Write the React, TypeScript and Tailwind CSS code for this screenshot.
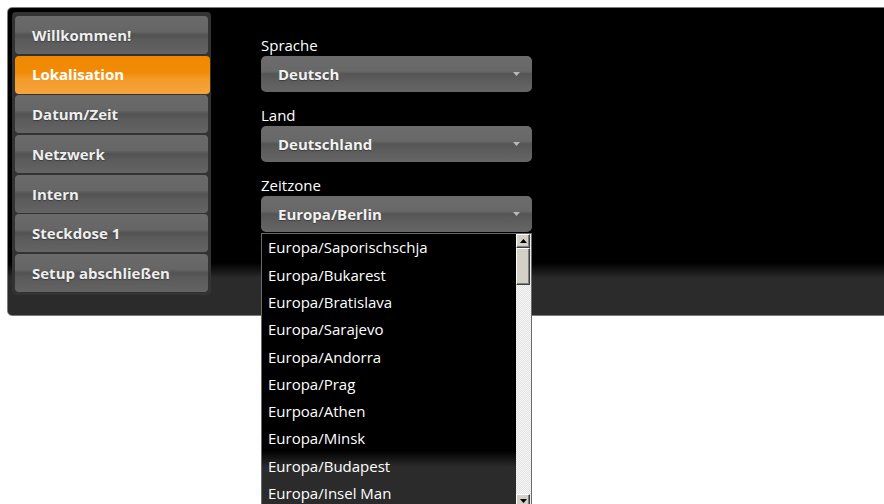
import React from "react";

const steps = [
  "Willkommen!",
  "Lokalisation",
  "Datum/Zeit",
  "Netzwerk",
  "Intern",
  "Steckdose 1",
  "Setup abschließen",
];

const zones = [
  "Europa/Saporischschja",
  "Europa/Bukarest",
  "Europa/Bratislava",
  "Europa/Sarajevo",
  "Europa/Andorra",
  "Europa/Prag",
  "Eurpoa/Athen",
  "Europa/Minsk",
  "Europa/Budapest",
  "Europa/Insel Man",
];

function Caret() {
  return (
    <svg width="7" height="4" viewBox="0 0 7 4" className="shrink-0">
      <polygon points="0,0 7,0 3.5,4" fill="#b9b9b9" />
    </svg>
  );
}

function Select({ value }: { value: string }) {
  return (
    <div className="flex h-[36px] w-[271px] items-center justify-between rounded-[5px] bg-[linear-gradient(180deg,#6c6c6c_0%,#686868_42%,#555555_50%,#5b5b5b_64%,#666666_100%)] pl-[17px] pr-[12px]">
      <span className="text-[15px] font-bold text-[#f2f2f2] [text-shadow:0_1px_1px_rgba(0,0,0,0.35)]">
        {value}
      </span>
      <Caret />
    </div>
  );
}

function ArrowButton({ up }: { up: boolean }) {
  return (
    <div className="flex h-[14px] w-[14px] items-center justify-center border border-t-white border-l-white border-r-[#404040] border-b-[#404040] bg-[#d4d0c8] shadow-[inset_-1px_-1px_0_#808080]">
      <svg width="7" height="4" viewBox="0 0 7 4">
        <polygon points={up ? "0,4 7,4 3.5,0" : "0,0 7,0 3.5,4"} fill="#000" />
      </svg>
    </div>
  );
}

export default function App() {
  return (
    <div className="relative h-[504px] w-[884px] overflow-hidden bg-white font-['Open_Sans',sans-serif]">
      <div className="ml-[7px] mt-[7px] flex h-[309px] w-[900px] rounded-[5px] border border-[#7c7c7c] bg-[linear-gradient(180deg,#000000_0%,#000000_83%,#2b2b2b_88%,#2b2b2b_100%)] p-[4px]">
        {/* step navigation */}
        <div className="flex h-[283px] w-[199px] flex-col gap-[1.7px] rounded-[4px] bg-[#333333] pl-[3px] pt-[4px]">
          {steps.map((s, i) =>
            i === 1 ? (
              <div
                key={s}
                className="flex h-[38px] w-[195px] items-center rounded-[4px] bg-[linear-gradient(180deg,#f08700_0%,#f18c08_45%,#f39a2a_60%,#f5a43c_100%)] pl-[17px] text-[15px] font-bold text-white"
              >
                {s}
              </div>
            ) : (
              <div
                key={s}
                className="flex h-[38px] w-[193px] items-center rounded-[4px] bg-[linear-gradient(180deg,#6a6a6a_0%,#666666_40%,#525252_50%,#5a5a5a_62%,#646464_100%)] pl-[17px] text-[15px] font-bold text-[#eeeeee] [text-shadow:0_1px_1px_rgba(0,0,0,0.35)]"
              >
                {s}
              </div>
            )
          )}
        </div>

        {/* localisation form */}
        <div className="ml-[50px] flex flex-col pt-[22px] text-[15px] text-white">
          <div className="h-[22px] leading-[22px]">Sprache</div>
          <Select value="Deutsch" />
          <div className="mt-[12px] h-[22px] leading-[22px]">Land</div>
          <Select value="Deutschland" />
          <div className="mt-[12px] h-[22px] leading-[22px]">Zeitzone</div>
          <div className="relative">
            <Select value="Europa/Berlin" />
            {/* open dropdown list */}
            <div className="absolute left-0 top-[37px] z-10 flex h-[276px] w-[271px] border border-[#6a6a6a] bg-[linear-gradient(180deg,#000000_0%,#000000_79%,#2b2b2b_85%,#2b2b2b_100%)]">
              <div className="flex-1 pl-[6px]">
                {zones.map((z) => (
                  <div key={z} className="flex h-[27.3px] items-center text-[15px] text-white">
                    {z}
                  </div>
                ))}
              </div>
              <div className="flex w-[15px] flex-col bg-[repeating-conic-gradient(#e2e2e2_0_25%,#f7f7f7_0_50%)] bg-[length:2px_2px]">
                <ArrowButton up />
                <div className="h-[37px] w-[14px] border border-t-white border-l-white border-r-[#404040] border-b-[#404040] bg-[#d4d0c8] shadow-[inset_-1px_-1px_0_#808080]" />
                <div className="flex-1" />
                <ArrowButton up={false} />
              </div>
            </div>
          </div>
        </div>
      </div>
    </div>
  );
}
